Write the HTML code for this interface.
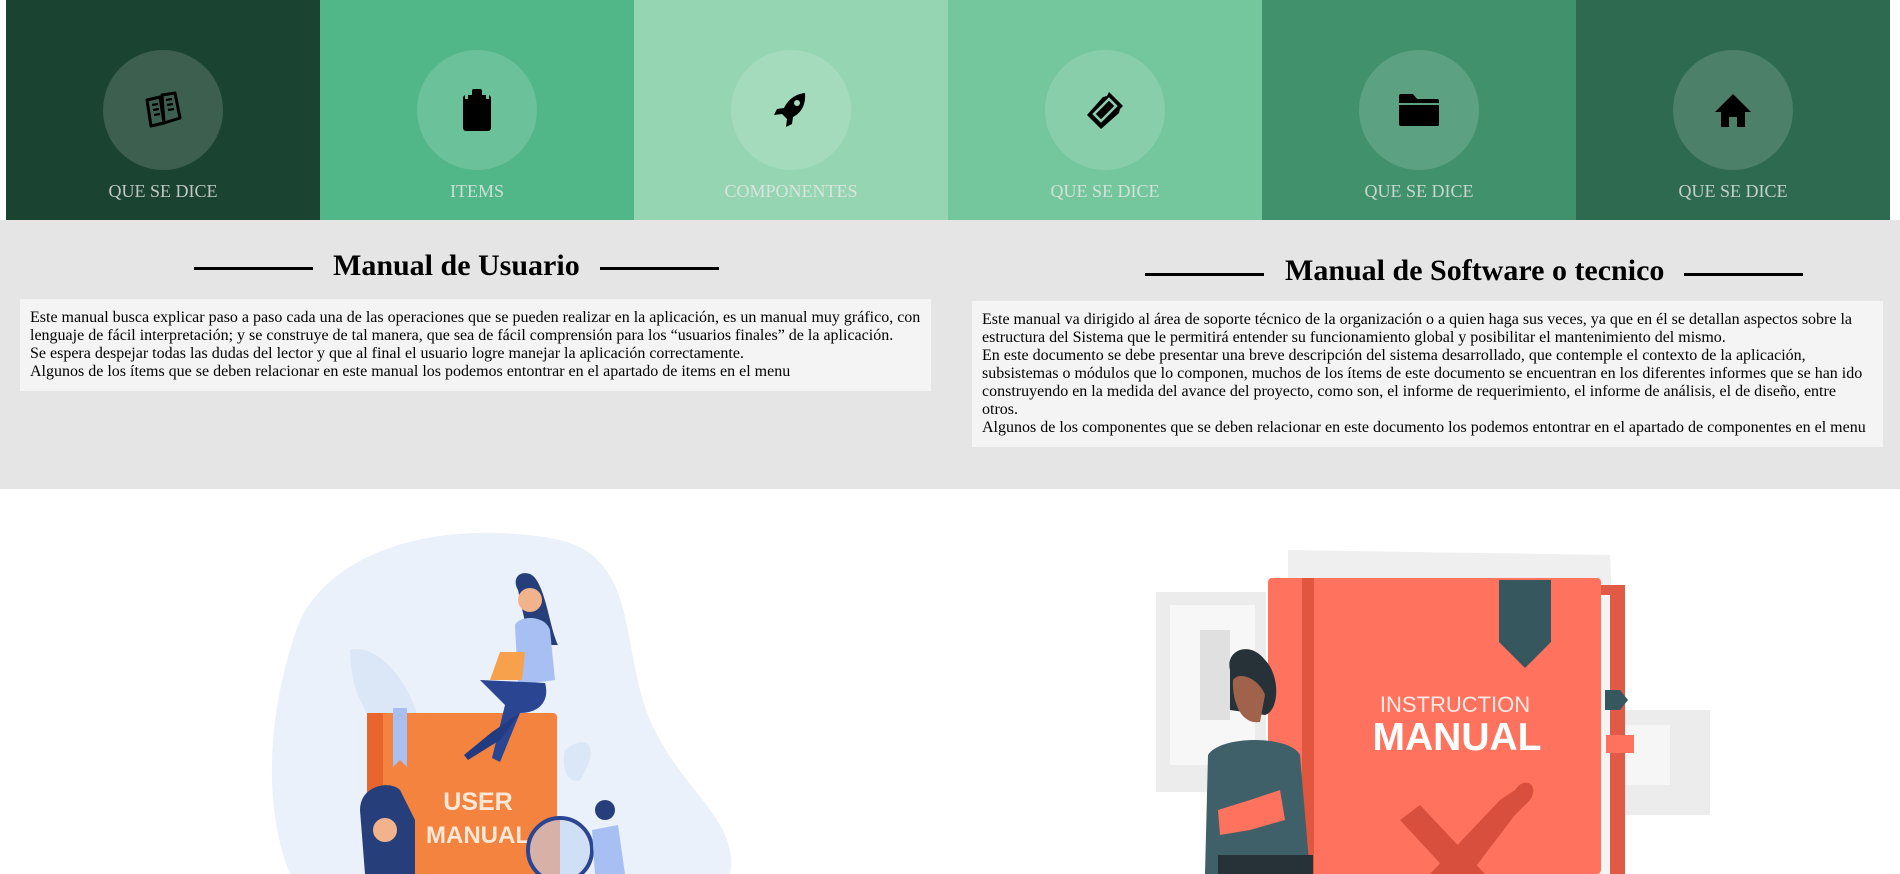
<!DOCTYPE html>
<html><head><meta charset="utf-8"><style>
*{margin:0;padding:0;box-sizing:border-box}
body{width:1900px;height:874px;overflow:hidden;background:#fff;font-family:"Liberation Serif",serif;position:relative}
.nav{position:absolute;left:6px;top:0;height:220px;width:1884px;display:flex}
.t{width:314px;height:220px;position:relative}
.c{position:absolute;left:97px;top:50px;width:120px;height:120px;border-radius:50%;background:rgba(255,255,255,0.15);display:flex;align-items:center;justify-content:center}
.l{position:absolute;left:0;right:0;top:181px;text-align:center;font-size:18px;color:rgba(232,232,232,0.8)}
.gray{position:absolute;left:0;top:220px;width:1900px;height:269px;background:#e5e5e5}
.h{position:absolute;font-weight:bold;font-size:30px;white-space:nowrap}
.ln{position:absolute;height:3px;background:#000;width:119px}
.box{position:absolute;background:#f4f4f4;padding:10px 10px;font-size:16px;line-height:18px;white-space:nowrap;color:#000}
.a{position:absolute}
</style></head><body>
<div class="nav">
<div class="t" style="background:#1b4332"><div class="c"><svg width="40" height="40" viewBox="0 0 40 40"><g fill="none" stroke="#000" stroke-width="3" stroke-linejoin="round"><path d="M4 10 L17 7 L21 33 L8 36 Z"/><path d="M21 33 L19 5 L32 3 L37 28 Z"/></g><g stroke="#000" stroke-width="2.2"><path d="M9 15l6-1M10 20l6-1M11 25l6-1M23 10l6-1M24 15l6-1M25 20l6-1"/></g></svg></div><div class="l">QUE SE DICE</div></div>
<div class="t" style="background:#52b788"><div class="c"><svg width="30" height="44" viewBox="0 0 30 44"><rect x="1" y="7" width="28" height="36" rx="3" fill="#000"/><rect x="10" y="1" width="10" height="9" rx="2" fill="#000"/><rect x="3" y="7" width="3" height="4" fill="#6cc19a"/><rect x="24" y="7" width="3" height="4" fill="#6cc19a"/></svg></div><div class="l">ITEMS</div></div>
<div class="t" style="background:#95d5b2"><div class="c"><svg width="40" height="40" viewBox="0 0 40 40"><path d="M34 3 C24 4 17 10 13 18 L6 19 L3 25 L11 24 L16 29 L15 37 L21 34 L22 27 C30 23 35 15 34 3Z" fill="#000"/><circle cx="26" cy="13" r="3" fill="#a2dcbd"/></svg></div><div class="l">COMPONENTES</div></div>
<div class="t" style="background:#74c69d"><div class="c"><svg width="42" height="42" viewBox="0 0 42 42"><path d="M25 3 L39 17 L36 20 L35 24 L17 40 L3 26 L19 8 L23 7Z" fill="#000"/><path d="M25 10 L32 17 L17 32 L10 25Z" fill="none" stroke="#8dceaf" stroke-width="2.5"/></svg></div><div class="l">QUE SE DICE</div></div>
<div class="t" style="background:#40916c"><div class="c"><svg width="42" height="34" viewBox="0 0 42 34"><path d="M1 3 Q1 1 3 1 L15 1 L19 6 L39 6 Q41 6 41 8 L41 10 L1 10Z" fill="#000"/><path d="M1 12 L41 12 L41 32 Q41 33 39 33 L3 33 Q1 33 1 31Z" fill="#000"/></svg></div><div class="l">QUE SE DICE</div></div>
<div class="t" style="background:#2d6a4f"><div class="c"><svg width="40" height="40" viewBox="0 0 40 40"><path d="M20 4 L38 22 L32 22 L32 37 L24 37 L24 27 L16 27 L16 37 L8 37 L8 22 L2 22Z" fill="#000"/></svg></div><div class="l">QUE SE DICE</div></div>
</div>
<div class="gray"></div>
<div class="ln" style="left:194px;top:267px"></div>
<div class="h" style="left:333px;top:249px">Manual de Usuario</div>
<div class="ln" style="left:600px;top:267px"></div>
<div class="box" style="left:20px;top:299px;width:911px;height:92px">Este manual busca explicar paso a paso cada una de las operaciones que se pueden realizar en la aplicación, es un manual muy gráfico, con<br>lenguaje de fácil interpretación; y se construye de tal manera, que sea de fácil comprensión para los “usuarios finales” de la aplicación.<br>Se espera despejar todas las dudas del lector y que al final el usuario logre manejar la aplicación correctamente.<br>Algunos de los ítems que se deben relacionar en este manual los podemos entontrar en el apartado de items en el menu</div>
<div class="ln" style="left:1145px;top:273px"></div>
<div class="h" style="left:1285px;top:254px">Manual de Software o tecnico</div>
<div class="ln" style="left:1684px;top:273px"></div>
<div class="box" style="left:972px;top:301px;width:911px;height:146px">Este manual va dirigido al área de soporte técnico de la organización o a quien haga sus veces, ya que en él se detallan aspectos sobre la<br>estructura del Sistema que le permitirá entender su funcionamiento global y posibilitar el mantenimiento del mismo.<br>En este documento se debe presentar una breve descripción del sistema desarrollado, que contemple el contexto de la aplicación,<br>subsistemas o módulos que lo componen, muchos de los ítems de este documento se encuentran en los diferentes informes que se han ido<br>construyendo en la medida del avance del proyecto, como son, el informe de requerimiento, el informe de análisis, el de diseño, entre<br>otros.<br>Algunos de los componentes que se deben relacionar en este documento los podemos entontrar en el apartado de componentes en el menu</div>

<svg class="a" style="left:200px;top:500px" width="560" height="374" viewBox="0 0 560 374">
<path d="M90 374 C60 300 70 200 100 120 C140 40 260 20 360 40 C440 60 420 150 450 220 C480 290 540 320 530 374Z" fill="#eaf1fa"/>
<path d="M150 150 C180 140 230 200 220 260 C200 250 150 220 150 150Z" fill="#dbe7f7"/>
<path d="M365 250 C390 230 400 250 380 280 C370 285 360 270 365 250Z" fill="#dbe7f7"/>
<rect x="167" y="213" width="190" height="161" rx="4" fill="#f4833f"/>
<rect x="167" y="213" width="16" height="161" fill="#e8652d"/>
<path d="M193 208 L207 208 L207 267 L200 260 L193 267Z" fill="#a8bff0"/>
<text x="278" y="310" text-anchor="middle" font-family="Liberation Sans,sans-serif" font-weight="bold" font-size="25" fill="#fde7d6">USER</text>
<text x="278" y="343" text-anchor="middle" font-family="Liberation Sans,sans-serif" font-weight="bold" font-size="24" fill="#fde7d6">MANUAL</text>
<path d="M318 90 C312 80 318 70 330 74 C345 80 350 130 358 145 L330 145Z" fill="#263f7a"/>
<circle cx="330" cy="100" r="12" fill="#f2b38c"/>
<path d="M315 125 C320 115 345 115 350 130 L355 180 L318 185Z" fill="#a7bff2"/>
<path d="M300 152 L325 152 L322 180 L290 180Z" fill="#f7a14c"/>
<path d="M280 180 L345 183 C350 200 340 213 320 213 L300 262 L292 258 L305 205 Z" fill="#2a4592"/>
<path d="M320 213 L300 240 L268 260 L264 255 L292 232Z" fill="#223a80"/>
<circle cx="360" cy="350" r="32" fill="#d7b1a8" stroke="#2a4592" stroke-width="4"/>
<path d="M360 320 A30 30 0 0 1 360 380Z" fill="#cfdff5"/>
<circle cx="405" cy="310" r="10" fill="#263f7a"/>
<path d="M392 330 L418 325 L425 374 L395 374Z" fill="#a7bff2"/>
<path d="M200 290 C190 280 160 285 160 310 L165 374 L215 374 L215 320Z" fill="#263f7a"/>
<circle cx="185" cy="330" r="12" fill="#f2b38c"/>
</svg>

<svg class="a" style="left:1130px;top:500px" width="600" height="374" viewBox="0 0 600 374">
<rect x="26" y="92" width="110" height="200" fill="#ececec"/>
<rect x="40" y="105" width="85" height="160" fill="#f7f7f7"/>
<rect x="70" y="130" width="30" height="90" fill="#e0e0e0"/>
<rect x="430" y="210" width="150" height="105" fill="#ececec"/>
<rect x="470" y="225" width="70" height="60" fill="#f6f6f6"/>
<path d="M158 50 L480 55 L490 300 L158 300Z" fill="#efefef"/>
<rect x="455" y="85" width="40" height="289" fill="#e15a46"/>
<rect x="452" y="95" width="28" height="279" fill="#f4f4f4"/>
<rect x="138" y="78" width="333" height="296" rx="4" fill="#ff725e"/>
<rect x="172" y="78" width="12" height="296" fill="#e0563f"/>
<path d="M369 80 L421 80 L421 142 L395 168 L369 142Z" fill="#37575e"/>
<path d="M475 190 L490 190 L498 200 L490 210 L475 210Z" fill="#37575e"/>
<rect x="476" y="235" width="28" height="18" fill="#ff725e"/>
<text x="325" y="212" text-anchor="middle" font-family="Liberation Sans,sans-serif" font-size="22" fill="#ffe9e4">INSTRUCTION</text>
<text x="327" y="250" text-anchor="middle" font-family="Liberation Sans,sans-serif" font-weight="bold" font-size="39" fill="#fff">MANUAL</text>
<path d="M270 320 L290 305 L355 374 L320 374Z" fill="#d8503d"/>
<path d="M300 374 L370 300 L385 290 C395 275 410 285 400 300 L385 315 L340 374Z" fill="#d8503d"/>
<path d="M100 170 C95 150 120 140 135 160 C150 175 150 210 135 215 L100 210Z" fill="#263238"/>
<path d="M103 180 C102 200 110 225 130 222 L135 195 C130 180 110 170 103 180Z" fill="#a0624a"/>
<path d="M78 255 C90 235 160 235 170 255 L180 374 L75 374Z" fill="#3f6068"/>
<path d="M88 310 L120 300 L150 290 L155 320 L120 330 L90 335Z" fill="#ff725e"/>
<rect x="88" y="355" width="95" height="19" fill="#263238"/>
</svg>
</body></html>
